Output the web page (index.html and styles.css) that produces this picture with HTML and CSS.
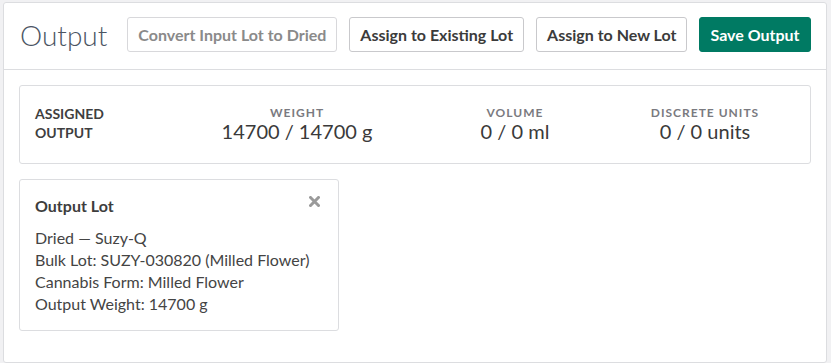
FILE: index.html
```html
<!DOCTYPE html>
<html lang="en">
<head>
  <meta charset="UTF-8" />
  <meta name="viewport" content="width=device-width, initial-scale=1.0" />
  <title>Output</title>
  <link rel="stylesheet" href="styles.css">
</head>
<body>
  <div class="panel">
    <div class="panel-header">
      <h1>Output</h1>
      <button class="btn btn-disabled" disabled>Convert Input Lot to Dried</button>
      <button class="btn">Assign to Existing Lot</button>
      <button class="btn">Assign to New Lot</button>
      <button class="btn btn-primary">Save Output</button>
    </div>

    <div class="panel-body">
      <div class="summary">
        <div class="summary-title">Assigned<br>Output</div>
        <div class="stat">
          <div class="stat-label">Weight</div>
          <div class="stat-value">14700 / 14700 g</div>
        </div>
        <div class="stat">
          <div class="stat-label">Volume</div>
          <div class="stat-value">0 / 0 ml</div>
        </div>
        <div class="stat">
          <div class="stat-label">Discrete Units</div>
          <div class="stat-value">0 / 0 units</div>
        </div>
      </div>

      <div class="lot-card">
        <svg class="lot-close" width="11" height="11" viewBox="0 0 11 11">
          <path d="M1.5 1.5 L9.5 9.5 M9.5 1.5 L1.5 9.5" stroke="#9a9a9a" stroke-width="3" stroke-linecap="square" />
        </svg>
        <h2>Output Lot</h2>
        <p>Dried &mdash; Suzy-Q</p>
        <p>Bulk Lot: SUZY-030820 (Milled Flower)</p>
        <p>Cannabis Form: Milled Flower</p>
        <p>Output Weight: 14700 g</p>
      </div>
    </div>
  </div>
</body>
</html>
```

FILE: styles.css
```css
body {
  font-family: Lato, 'Open Sans', sans-serif;
  background: #f1f1f3;
  color: #3d3d3d;
  margin: 2px 4px 0 3px;
}
.panel {
  background: #fff;
  border: 1px solid #dcdde0;
  border-radius: 3px;
  height: 359px;
}
.panel-header {
  display: flex;
  align-items: center;
  gap: 12px;
  height: 63px;
  padding: 0 15px 3px 16px;
  border-bottom: 1px solid #dcdde0;
}
h1 {
  font-weight: 300;
  font-size: 28px;
  color: #4b5563;
  margin: 0 8px 0 0;
}
.btn {
  font-family: Lato, sans-serif;
  font-weight: bold;
  font-size: 16px;
  color: #3b3b3b;
  background: #fff;
  border: 1px solid #c9c9cc;
  border-radius: 3px;
  height: 35px;
  padding: 0 10px;
}
.btn-disabled {
  color: #8a8a8a;
  border-color: #d8d8db;
}
.btn-primary {
  background: #007a63;
  border-color: #007a63;
  color: #fff;
}
.panel-body {
  padding: 15px 15px 0 15px;
}
.summary {
  display: grid;
  grid-template-columns: 155px 214px 222px 158px;
  align-items: center;
  height: 74px;
  padding: 0 15px 3px 15px;
  border: 1px solid #dcdde0;
  border-radius: 3px;
}
.summary-title {
  font-weight: bold;
  font-size: 14px;
  line-height: 19px;
  text-transform: uppercase;
  color: #3f3f3f;
}
.stat {
  text-align: center;
}
.stat-label {
  font-weight: bold;
  font-size: 12px;
  letter-spacing: 1px;
  text-transform: uppercase;
  color: #7a7a80;
  line-height: 15px;
}
.stat-value {
  font-size: 20px;
  line-height: 22px;
  color: #3a3a3a;
}
.lot-card {
  position: relative;
  width: 287px;
  margin-top: 15px;
  padding: 14px 16px 15px 15px;
  border: 1px solid #dcdde0;
  border-radius: 3px;
}
.lot-card h2 {
  font-size: 16px;
  font-weight: bold;
  color: #3d3d3d;
  margin: 2px 0 12px 0;
}
.lot-card p {
  font-size: 16px;
  line-height: 22px;
  margin: 0;
  color: #444;
}
.lot-close {
  position: absolute;
  top: 16px;
  right: 18px;
}
```
